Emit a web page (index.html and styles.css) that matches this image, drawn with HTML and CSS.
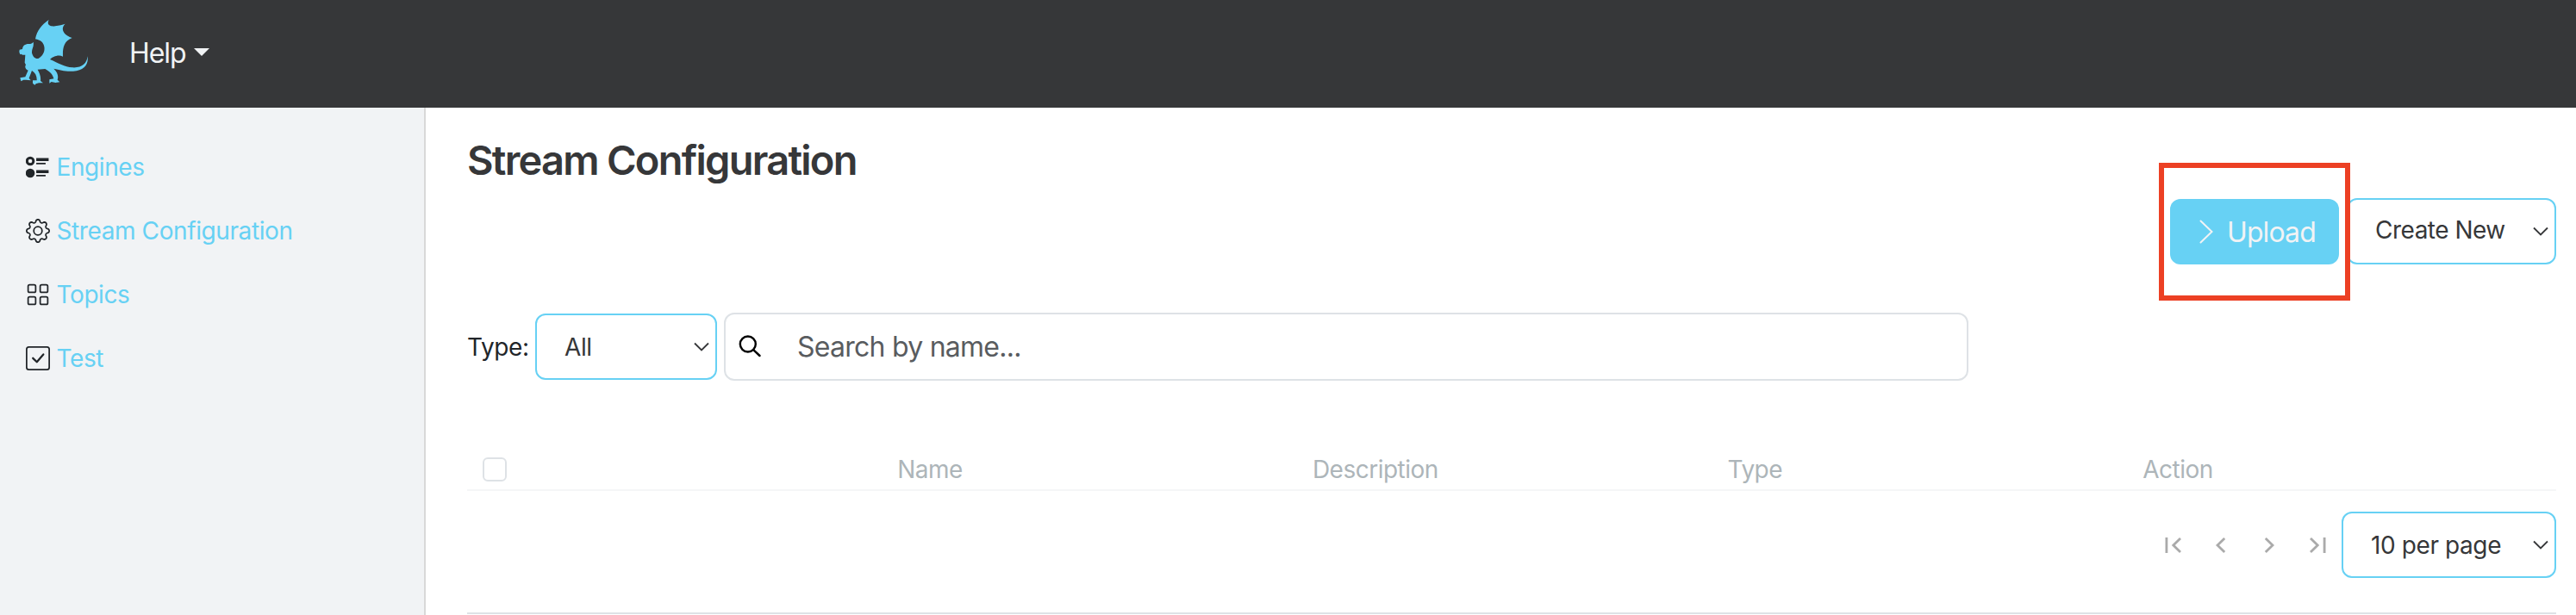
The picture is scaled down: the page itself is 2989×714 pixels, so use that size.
FILE: index.html
```html
<!DOCTYPE html>
<html lang="en">
<head>
<meta charset="utf-8">
<title>Stream Configuration</title>
<link rel="stylesheet" href="styles.css">
</head>
<body>
<header class="topbar">
  <svg class="logo" viewBox="0 0 240 228">
    <path d="M104 0C96 16 106 25 126 22C140 20 151 17 161 14C146 28 149 51 185 63C155 75 152 99 153 128C138 119 117 128 108 138C138 151 158 164 186 166C219 168 236 153 239 127C243 158 225 177 189 179C160 181 143 174 121 170C135 183 138 196 134 209L142 217L127 219L113 216L106 221V208L121 205C118 191 108 180 91 171L65 173C72 186 77 199 75 213L84 220L69 220L59 223L55 227L48 221V211L62 211C63 197 57 184 45 177L35 203L41 211L24 209L16 209L7 214L4 202L22 199L32 176C23 172 19 164 24 157L20 149L22 122H13L7 119L4 121L1 112L2 104L12 102C13 91 20 84 34 84C42 84 47 82 50 77C53 96 44 100 45 115C48 129 57 137 67 135C83 127 91 110 88 94C86 79 75 70 57 67C62 37 79 18 104 0Z"/>
  </svg>
  <div class="help">Help<span class="caret"></span></div>
</header>
<div class="shell">
  <nav class="sidebar">
    <a class="nav-item">
      <svg class="nav-icon" viewBox="0 0 16 16"><circle cx="2.900" cy="4" r="2.150" fill="none" stroke="currentColor" stroke-width="1.700"/><circle cx="2.900" cy="12" r="3"/><path d="M6.900 1.950h8.200v2.100H6.900zM6.900 5.100h6.200v1H6.900zM6.900 9.950h8.200v2.100H6.900zM6.900 13.100h6.200v1H6.900z"/></svg>
      <span>Engines</span>
    </a>
    <a class="nav-item">
      <svg class="nav-icon" viewBox="0 0 16 16"><path d="M8 4.754a3.246 3.246 0 1 0 0 6.492 3.246 3.246 0 0 0 0-6.492zM5.754 8a2.246 2.246 0 1 1 4.492 0 2.246 2.246 0 0 1-4.492 0z"/><path d="M9.796 1.343c-.527-1.79-3.065-1.79-3.592 0l-.094.319a.873.873 0 0 1-1.255.52l-.292-.16c-1.64-.892-3.433.902-2.54 2.541l.159.292a.873.873 0 0 1-.52 1.255l-.319.094c-1.79.527-1.79 3.065 0 3.592l.319.094a.873.873 0 0 1 .52 1.255l-.16.292c-.892 1.64.901 3.434 2.541 2.54l.292-.159a.873.873 0 0 1 1.255.52l.094.319c.527 1.79 3.065 1.79 3.592 0l.094-.319a.873.873 0 0 1 1.255-.52l.292.16c1.64.893 3.434-.902 2.54-2.541l-.159-.292a.873.873 0 0 1 .52-1.255l.319-.094c1.79-.527 1.79-3.065 0-3.592l-.319-.094a.873.873 0 0 1-.52-1.255l.16-.292c.893-1.64-.902-3.433-2.541-2.54l-.292.159a.873.873 0 0 1-1.255-.52l-.094-.319zm-2.633.283c.246-.835 1.428-.835 1.674 0l.094.319a1.873 1.873 0 0 0 2.693 1.115l.291-.16c.764-.415 1.6.42 1.184 1.185l-.159.292a1.873 1.873 0 0 0 1.116 2.692l.318.094c.835.246.835 1.428 0 1.674l-.319.094a1.873 1.873 0 0 0-1.115 2.693l.16.291c.415.764-.42 1.6-1.185 1.184l-.291-.159a1.873 1.873 0 0 0-2.693 1.116l-.094.318c-.246.835-1.428.835-1.674 0l-.094-.319a1.873 1.873 0 0 0-2.692-1.115l-.292.16c-.764.415-1.6-.42-1.184-1.185l.159-.291A1.873 1.873 0 0 0 1.945 8.93l-.319-.094c-.835-.246-.835-1.428 0-1.674l.319-.094A1.873 1.873 0 0 0 3.06 4.377l-.16-.292c-.415-.764.42-1.6 1.185-1.184l.292.159a1.873 1.873 0 0 0 2.692-1.115l.094-.319z"/></svg>
      <span>Stream Configuration</span>
    </a>
    <a class="nav-item">
      <svg class="nav-icon" viewBox="0 0 16 16"><path d="M1 2.500A1.500 1.500 0 0 1 2.500 1h3A1.500 1.500 0 0 1 7 2.500v3A1.500 1.500 0 0 1 5.500 7h-3A1.500 1.500 0 0 1 1 5.500v-3zM2.500 2a.5.5 0 0 0-.5.5v3a.5.5 0 0 0 .5.5h3a.5.5 0 0 0 .5-.5v-3a.5.5 0 0 0-.5-.5h-3zm6.500.5A1.500 1.500 0 0 1 10.500 1h3A1.500 1.500 0 0 1 15 2.500v3A1.500 1.500 0 0 1 13.500 7h-3A1.500 1.500 0 0 1 9 5.500v-3zm1.500-.5a.5.5 0 0 0-.5.5v3a.5.5 0 0 0 .5.5h3a.5.5 0 0 0 .5-.5v-3a.5.5 0 0 0-.5-.5h-3zM1 10.500A1.500 1.500 0 0 1 2.500 9h3A1.500 1.500 0 0 1 7 10.500v3A1.500 1.500 0 0 1 5.500 15h-3A1.500 1.500 0 0 1 1 13.500v-3zm1.500-.5a.5.5 0 0 0-.5.5v3a.5.5 0 0 0 .5.5h3a.5.5 0 0 0 .5-.5v-3a.5.5 0 0 0-.5-.5h-3zm6.500.5A1.500 1.500 0 0 1 10.500 9h3a1.500 1.500 0 0 1 1.500 1.500v3a1.500 1.500 0 0 1-1.500 1.500h-3A1.500 1.500 0 0 1 9 13.500v-3zm1.500-.5a.5.5 0 0 0-.5.5v3a.5.5 0 0 0 .5.5h3a.5.5 0 0 0 .5-.5v-3a.5.5 0 0 0-.5-.5h-3z"/></svg>
      <span>Topics</span>
    </a>
    <a class="nav-item">
      <svg class="nav-icon" viewBox="0 0 16 16"><rect x=".5" y=".5" width="15" height="15" rx="1.500" fill="none" stroke="currentColor"/><path d="M4.700 7.900L7.300 10.400L11.600 5.400" fill="none" stroke="currentColor" stroke-width="1.300" stroke-linecap="round" stroke-linejoin="round"/></svg>
      <span>Test</span>
    </a>
  </nav>
  <main class="content">
    <h1 class="title">Stream Configuration</h1>
    <div class="actions">
      <div class="highlight">
        <button class="upload"><svg class="chev-right" viewBox="0 0 16 28"><path d="M1.500 1.500L14.500 14L1.500 26.500"/></svg><span class="upload-text">Upload</span></button>
      </div>
      <div class="select create"><span>Create New</span><svg class="chev" viewBox="0 0 18 12"><path d="M1 1.500L9 9.500L17 1.500"/></svg></div>
    </div>
    <div class="filters">
      <span class="label">Type:</span>
      <div class="select type"><span>All</span><svg class="chev" viewBox="0 0 18 12"><path d="M1 1.500L9 9.500L17 1.500"/></svg></div>
      <div class="search">
        <svg class="lens" viewBox="0 0 26 26"><circle cx="10.800" cy="10.500" r="9"/><path d="M17.200 17.200L24.500 24"/></svg>
        <span>Search by name...</span>
      </div>
    </div>
    <div class="table-head">
      <div class="cell check"><span class="checkbox"></span></div>
      <div class="cell">Name</div>
      <div class="cell">Description</div>
      <div class="cell">Type</div>
      <div class="cell">Action</div>
    </div>
    <div class="pager">
      <svg class="page-icon" viewBox="0 0 20 20"><path d="M1.900 1V19M18 2L9.800 10L18 18"/></svg>
      <svg class="page-icon" viewBox="0 0 20 20"><path d="M14.200 2L6 10L14.200 18"/></svg>
      <svg class="page-icon" viewBox="0 0 20 20"><path d="M5.800 2L14 10L5.800 18"/></svg>
      <svg class="page-icon" viewBox="0 0 20 20"><path d="M18.100 1V19M2 2L10.200 10L2 18"/></svg>
      <div class="select per-page"><span>10 per page</span><svg class="chev" viewBox="0 0 18 12"><path d="M1 1.500L9 9.500L17 1.500"/></svg></div>
    </div>
    <div class="rule"></div>
  </main>
</div>
</body>
</html>
```
FILE: styles.css
```css
* { box-sizing: border-box; }
body { margin: 0; width: 2989px; height: 714px; overflow: hidden; font: 28px/42px Inter, "Liberation Sans", sans-serif; letter-spacing: -.400px; color: #212529; background: #fff; }
.topbar { height: 125px; background: #363739; display: flex; align-items: flex-start; padding-left: 22px; }
.logo { width: 80px; height: 76px; margin-top: 23px; fill: #67d1f4; }
.help { margin: 38px 0 0 48px; font-size: 32px; line-height: 48px; color: #f1f3f5; display: flex; align-items: center; letter-spacing: -1.100px; }
.caret { margin: -3px 0 0 10px; border: 9px solid transparent; border-top-color: #f1f3f5; border-bottom: 0; }
.shell { display: flex; height: 589px; }
.sidebar { width: 494px; background: #f1f3f5; border-right: 2px solid #d8d8d8; padding: 48px 0 0 30px; display: flex; flex-direction: column; gap: 32px; }
.nav-item { height: 42px; display: flex; align-items: center; gap: 7.500px; color: #67d1f4; }
.nav-icon { width: 28px; height: 28px; fill: #212529; color: #212529; }
.content { width: 2495px; padding: 0 23px 0 48px; }
.title { margin: 0; padding-top: 32px; font-size: 47px; line-height: 58px; font-weight: 600; color: #363739; letter-spacing: -1.750px; }
.actions { display: flex; justify-content: flex-end; height: 160px; margin-top: -26px; }
.highlight { width: 222px; height: 160px; border: 6px solid #ec4024; padding: 36px 7px; position: relative; z-index: 1; }
.upload { display: flex; align-items: center; width: 196px; height: 76px; border: 0; border-radius: 12px; background: #67d1f4; color: #f1f3f5; font: 32px/48px Inter, sans-serif; letter-spacing: -.900px; padding: 0 0 0 34px; }
.upload-text { padding-top: 2px; }
.chev-right { width: 16px; height: 28px; fill: none; stroke: #f1f3f5; stroke-width: 2; stroke-linecap: round; margin-right: 16px; }
.select { border: 2px solid #67d1f4; border-radius: 12px; height: 77px; display: flex; align-items: center; justify-content: space-between; color: #363739; background: #fff; }
.chev { width: 18px; height: 12px; fill: none; stroke: #363739; stroke-width: 1.800; }
.create { width: 243px; margin: 41px 0 0 -4px; padding: 0 7px 4px 31px; letter-spacing: -.500px; }
.create .chev { margin-top: 4px; }
.filters { display: flex; align-items: center; margin-top: 14px; height: 79px; }
.label { width: 79px; }
.type { width: 211px; padding: 0 7px 0 32px; margin-right: 8px; }
.search { width: 1444px; height: 79px; border: 2px solid #dee2e6; border-radius: 12px; display: flex; align-items: center; color: #595c5f; padding-left: 15px; font-size: 32px; letter-spacing: -.750px; }
.lens { width: 26px; height: 26px; fill: none; stroke: #000; stroke-width: 2.400; stroke-linecap: round; margin: -2px 42px 0 0; }
.table-head { display: grid; grid-template-columns: repeat(4, 481.700px) 1fr; height: 59px; margin-top: 69px; border-bottom: 2px solid #f5f6f7; color: #adb5b9; letter-spacing: -.500px; }
.cell { padding-left: 17.500px; line-height: 68px; }
.check { padding: 20px 0 0 18px; }
.checkbox { display: block; width: 28px; height: 28px; border: 2px solid #dee2e6; border-radius: 6px; }
.pager { display: flex; align-items: center; justify-content: flex-end; height: 77px; margin-top: 24px; }
.page-icon { width: 20px; height: 20px; fill: none; stroke: #aaa; stroke-width: 2.800; margin-right: 35.700px; }
.per-page { width: 249px; padding: 0 7px 0 32px; margin-left: -17.500px; }
.rule { height: 2px; background: #dee2e6; margin-top: 40px; }
```
